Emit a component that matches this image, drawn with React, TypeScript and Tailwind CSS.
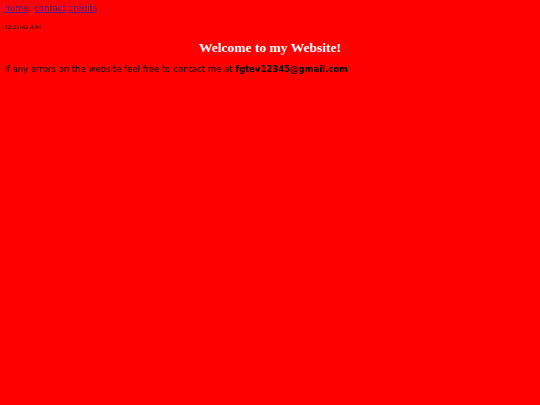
export default function App() {
  return (
    <div className="min-h-screen w-full bg-[#ff0000] px-1 pt-[2px] text-black">
      <nav className="font-['DejaVu_Sans',sans-serif] text-[8.5px] leading-[12px]">
        <a href="#" className="text-[#551a8b] underline decoration-[#551a8b] decoration-1">home</a>
        <span>, </span>
        <a href="#" className="text-[#551a8b] underline decoration-[#551a8b] decoration-1">contact</a>{' '}
        <a href="#" className="text-[#551a8b] underline decoration-[#551a8b] decoration-1">credits</a>
      </nav>
      <p className="mt-[8px] font-['Liberation_Serif',serif] text-[6.8px] leading-[9px]">12:21:42 AM</p>
      <h1 className="mt-[8px] text-center font-['Liberation_Serif',serif] text-[13.5px] font-bold leading-[17px] text-white">
        Welcome to my Website!
      </h1>
      <p className="mt-[8px] font-['DejaVu_Sans',sans-serif] text-[8.5px] leading-[11px]">
        If any errors on the website feel free to contact me at <b>fgtev12345@gmail.com</b>
      </p>
    </div>
  )
}
